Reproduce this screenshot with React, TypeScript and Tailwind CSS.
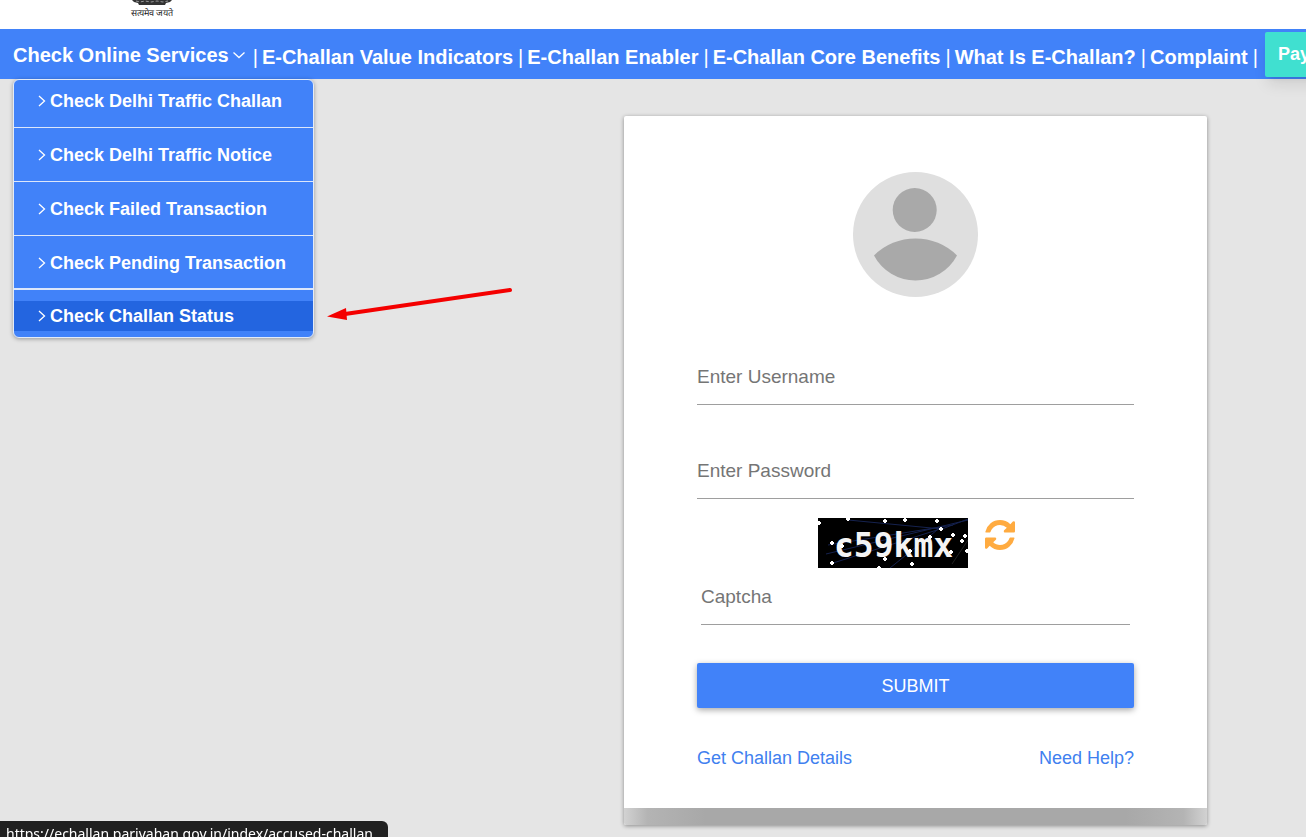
import React from 'react'

const services = [
	'Check Delhi Traffic Challan',
	'Check Delhi Traffic Notice',
	'Check Failed Transaction',
	'Check Pending Transaction'
]

const rowHeights = ['h-[47px] pb-[5px]', 'h-[53px]', 'h-[53px]', 'h-[52px] pt-px']

const navLinks = ['E-Challan Value Indicators', 'E-Challan Enabler', 'E-Challan Core Benefits', 'What Is E-Challan?', 'Complaint']

const stars = [
	[1, 5], [30, 1], [67, 3], [87, 2], [119, 3], [123, 11], [135, 17], [147, 18], [144, 23], [14, 25],
	[24, 28], [14, 45], [67, 41], [92, 33], [94, 46], [133, 34], [112, 19], [61, 50], [149, 33]
]

const Emblem = () => (
	<svg className="w-[42px] h-[6px]" viewBox="0 0 42 6">
		<path d="M1 0h40l-2 2-4 1-1 2H8L7 3 3 2z" fill="#333" />
		<path d="M5 1l4 1 5-1 6 1 6-1 6 1 5-1" stroke="#999" strokeWidth="1" strokeDasharray="3 2" fill="none" />
	</svg>
)

const ChevronRight = () => (
	<svg className="w-2 h-3 shrink-0" viewBox="0 0 8 12" fill="none" stroke="currentColor" strokeWidth="1.3">
		<path d="M1 1L6.500 6L1 11" />
	</svg>
)

const Refresh = () => (
	<svg className="w-[30px] h-[30px]" viewBox="0 128 1536 1536" fill="currentColor">
		<path d="M1511 1056q0 5-1 7-64 268-268 434.500t-478 166.500q-146 0-282.500-55t-243.500-157l-129 129q-19 19-45 19t-45-19-19-45v-448q0-26 19-45t45-19h448q26 0 45 19t19 45-19 45l-137 137q71 66 161 102t187 36q134 0 250-65t186-179q11-17 53-117 8-23 30-23h192q13 0 22.500 9.500t9.500 22.500zm25-800v448q0 26-19 45t-45 19h-448q-26 0-45-19t-19-45 19-45l138-138q-148-137-349-137-134 0-250 65t-186 179q-11 17-53 117-8 23-30 23h-199q-13 0-22.500-9.500t-9.500-22.500v-7q65-268 270-434.500t480-166.500q146 0 284 55.500t245 156.500l130-129q19-19 45-19t45 19 19 45z" />
	</svg>
)

const Avatar = () => (
	<svg className="w-[125px] h-[125px] mx-auto" viewBox="0 0 125 125">
		<circle cx="62.5" cy="62.5" r="62.5" fill="#dfdfdf" />
		<circle cx="61.7" cy="38" r="22" fill="#a9a9a9" />
		<path d="M21 83.500A59 59 0 0 1 104 83.500A47 47 0 0 1 21 83.500z" fill="#a9a9a9" />
	</svg>
)

const CaptchaImage = () => (
	<svg className="w-[150px] h-[50px]" viewBox="0 0 150 50" role="img">
		<rect width="150" height="50" fill="#000" />
		<g stroke="#15224f" fill="none">
			<path d="M30 2L124 11L150 1" />
			<path d="M8 36L150 2" />
			<path d="M12 46L122 11" />
			<path d="M10 27L135 7" />
			<path d="M72 50L124 8" />
			<path d="M134 46L150 22" stroke="#222" />
		</g>
		<text x="16" y="39" fill="#f4f4f4" fontSize="33" fontWeight="700" className="font-['DejaVu_Sans_Mono',monospace]">
			c59kmx
		</text>
		{stars.map(([x, y]) => (
			<path key={`${x}-${y}`} d={`M${x - 2} ${y}h4M${x} ${y - 2}v4`} stroke="#fff" strokeWidth="2" />
		))}
	</svg>
)

const Field = ({ id, label, type = 'text' }: { id: string; label: string; type?: string }) => (
	<input
		id={id}
		type={type}
		aria-label={label}
		placeholder={label}
		className="block w-full h-14 border-b border-[#9e9e9e] bg-transparent text-[19px] outline-none placeholder:text-[#757575]"
	/>
)

const ServicesMenu = () => (
	<div className="relative">
		<button className="flex items-center gap-1 h-[50px] pt-[2px] text-xl font-bold">
			Check Online Services
			<svg className="w-3 h-2" viewBox="0 0 12 8" fill="none" stroke="currentColor" strokeWidth="1.3">
				<path d="M0.500 1.500L6 6.500L11.500 1.500" />
			</svg>
		</button>
		<ul className="absolute left-0 top-full z-10 w-[301px] rounded-md border border-[#e3ebf8] bg-[#4182f9] shadow-[0_1px_4px_rgba(0,0,0,0.35)] text-lg font-bold overflow-hidden">
			{services.map((name, i) => (
				<li key={name} className="border-b border-[#dce7fb]">
					<a href="#" className={`flex items-center gap-1 pl-6 ${rowHeights[i]}`}>
						<ChevronRight />
						{name}
					</a>
				</li>
			))}
			<li className="border-t border-[#dce7fb] pt-[11px] pb-[6px]">
				<a href="#" className="flex items-center gap-1 pl-6 h-[30px] bg-[#2365e0]">
					<ChevronRight />
					Check Challan Status
				</a>
			</li>
		</ul>
		<svg className="absolute left-[312px] top-[255px] w-[190px] h-[40px]" viewBox="0 0 190 40">
			<path d="M20 30L185 6" stroke="#f40000" strokeWidth="4" strokeLinecap="round" />
			<path d="M2 32.500L21 24L22 36z" fill="#f40000" />
		</svg>
	</div>
)

const App = () => {
	return (
		<div className="relative min-h-screen overflow-hidden bg-[#e5e5e5] pb-3 font-['Liberation_Sans',Arial,sans-serif]">
			<header className="h-[29px] bg-white pl-[131px]">
				<div className="flex w-[42px] flex-col items-center">
					<Emblem />
					<span className="whitespace-nowrap text-[9px] leading-[15px] text-[#222]">सत्यमेव जयते</span>
				</div>
			</header>
			<nav className="flex h-[50px] items-center whitespace-nowrap bg-[#4182f9] pl-[13px] text-white">
				<ServicesMenu />
				<div className="flex gap-1 pl-[7px] pt-[6px] text-xl font-bold">
					<span className="pl-px font-normal">|</span>
					{navLinks.map((name) => (
						<React.Fragment key={name}>
							<a href="#">{name}</a>
							<span className="pl-px font-normal">|</span>
						</React.Fragment>
					))}
				</div>
				<button className="ml-[7px] h-[45px] w-[120px] shrink-0 rounded-xs bg-[#40e0d0] pl-[13px] text-left text-lg font-bold shadow-lg">
					Pay
				</button>
			</nav>
			<main className="mr-[99px] ml-auto mt-[37px] w-full max-w-[583px] overflow-hidden rounded-xs bg-white shadow-[0_1px_4px_rgba(0,0,0,0.4)]">
				<form className="px-[73px] pt-14 pb-[38px]">
					<Avatar />
					<div className="mt-[52px]">
						<Field id="username" label="Enter Username" />
					</div>
					<div className="mt-[38px]">
						<Field id="password" label="Enter Password" type="password" />
					</div>
					<div className="mt-[19px] flex justify-center gap-[17px] pl-[2px]">
						<CaptchaImage />
						<button type="button" aria-label="Reload" className="h-[30px] mt-[2px] text-[#ffab40]">
							<Refresh />
						</button>
					</div>
					<div className="mx-1 mt-px">
						<Field id="captcha" label="Captcha" />
					</div>
					<button
						type="button"
						className="mt-[38px] block h-[45px] w-full rounded-xs bg-[#4182f9] text-lg text-white shadow-[0_2px_6px_rgba(0,0,0,0.35)]"
					>
						SUBMIT
					</button>
					<div className="mt-[38px] flex justify-between text-lg leading-6 text-[#4080ef]">
						<a href="#">Get Challan Details</a>
						<a href="#">Need Help?</a>
					</div>
				</form>
				<div className="h-[17px] bg-[linear-gradient(to_right,#d2d2d2,#b4b4b4_4%,#a8a8a8_14%,#a8a8a8_86%,#b4b4b4_96%,#d2d2d2)]" />
			</main>
			<div className="fixed bottom-0 left-0 h-4 rounded-tr-md bg-[#202020] pl-[6px] pr-[15px] pt-[3px] font-['Noto_Sans',sans-serif] text-sm text-white">
				https://echallan.parivahan.gov.in/index/accused-challan
			</div>
		</div>
	)
}

export default App
